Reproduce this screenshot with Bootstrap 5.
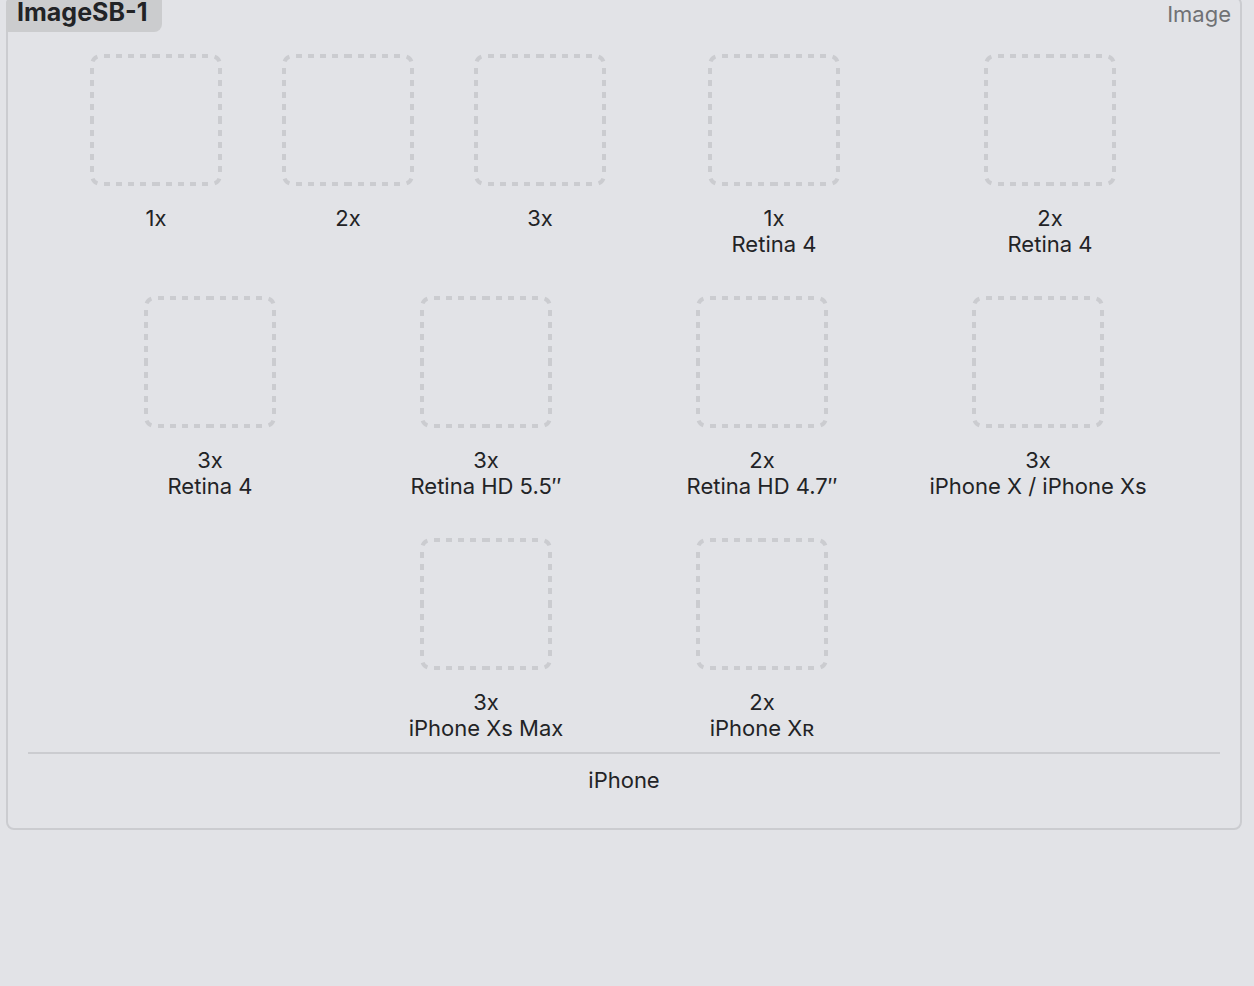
<!DOCTYPE html>
<html lang="en">
<head>
<meta charset="utf-8">
<meta name="viewport" content="width=device-width, initial-scale=1">
<title>ImageSB-1</title>
<link href="https://cdn.jsdelivr.net/npm/bootstrap@5.3.0/dist/css/bootstrap.min.css" rel="stylesheet">
<style>
  :root { --well: #cbccd0; --ink: #222326; }
  body { background: #e2e3e7; color: var(--ink); font-family: Inter, "Liberation Sans", sans-serif; font-size: 22px; line-height: 26px; }
  .asset-set { margin: -4px 12px 0 6px; border: 2px solid var(--well); border-radius: 8px; padding-bottom: 35px; }
  .asset-title { margin: -2px 0 0 -2px; padding: 4px 15px 8px 11px; background: #cbccce; border-radius: 8px 0 8px 0; font-size: 25px; line-height: 24px; font-weight: 700; }
  .asset-kind { padding: 3px 9px 0 0; color: #707174; }
  .slots { margin: 22px 20px 0; padding-bottom: 11px; row-gap: 39px; border-bottom: 2px solid var(--well); }
  .slot { width: 192px; }
  .slot-wide { width: 276px; }
  .slot svg { width: 132px; height: 132px; margin-bottom: 19px; fill: none; stroke: var(--well); stroke-width: 4px; }
  .idiom { padding-top: 13px; }
</style>
</head>
<body>
<svg class="d-none" aria-hidden="true">
  <symbol id="well" viewBox="0 0 132 132">
    <path stroke-dasharray="6 6 6 6 6 6 6 6 8 6 6 6 6 6 6 6 6 6" d="M14 2H118"/>
    <path stroke-dasharray="6 6 6 6 6 6 6 6 8 6 6 6 6 6 6 6 6 6" d="M14 130H118"/>
    <path stroke-dasharray="6 6 6 6 6 6 6 6 8 6 6 6 6 6 6 6 6 6" d="M2 14V118"/>
    <path stroke-dasharray="6 6 6 6 6 6 6 6 8 6 6 6 6 6 6 6 6 6" d="M130 14V118"/>
    <path d="M2.6 7.4A8 8 0 0 1 7.4 2.6M124.600 2.600A8 8 0 0 1 129.400 7.400M129.400 124.600A8 8 0 0 1 124.600 129.400M7.400 129.400A8 8 0 0 1 2.600 124.600"/>
  </symbol>
</svg>
<main class="asset-set">
  <header class="d-flex justify-content-between align-items-start">
    <h1 class="asset-title">ImageSB-1</h1>
    <span class="asset-kind">Image</span>
  </header>
  <section class="slots d-flex flex-wrap justify-content-center text-center" aria-labelledby="idiom">
    <div class="slot d-flex flex-column align-items-center"><svg aria-hidden="true"><use href="#well"/></svg><span>1x</span></div>
    <div class="slot d-flex flex-column align-items-center"><svg aria-hidden="true"><use href="#well"/></svg><span>2x</span></div>
    <div class="slot d-flex flex-column align-items-center"><svg aria-hidden="true"><use href="#well"/></svg><span>3x</span></div>
    <div class="slot slot-wide d-flex flex-column align-items-center"><svg aria-hidden="true"><use href="#well"/></svg><span>1x</span><span>Retina 4</span></div>
    <div class="slot slot-wide d-flex flex-column align-items-center"><svg aria-hidden="true"><use href="#well"/></svg><span>2x</span><span>Retina 4</span></div>
    <div class="slot slot-wide d-flex flex-column align-items-center"><svg aria-hidden="true"><use href="#well"/></svg><span>3x</span><span>Retina 4</span></div>
    <div class="slot slot-wide d-flex flex-column align-items-center"><svg aria-hidden="true"><use href="#well"/></svg><span>3x</span><span>Retina HD 5.5″</span></div>
    <div class="slot slot-wide d-flex flex-column align-items-center"><svg aria-hidden="true"><use href="#well"/></svg><span>2x</span><span>Retina HD 4.7″</span></div>
    <div class="slot slot-wide d-flex flex-column align-items-center"><svg aria-hidden="true"><use href="#well"/></svg><span>3x</span><span>iPhone X / iPhone Xs</span></div>
    <div class="slot slot-wide d-flex flex-column align-items-center"><svg aria-hidden="true"><use href="#well"/></svg><span>3x</span><span>iPhone Xs Max</span></div>
    <div class="slot slot-wide d-flex flex-column align-items-center"><svg aria-hidden="true"><use href="#well"/></svg><span>2x</span><span>iPhone Xʀ</span></div>
  </section>
  <div class="idiom text-center" id="idiom">iPhone</div>
</main>
<script src="https://cdn.jsdelivr.net/npm/bootstrap@5.3.0/dist/js/bootstrap.bundle.min.js"></script>
</body>
</html>
